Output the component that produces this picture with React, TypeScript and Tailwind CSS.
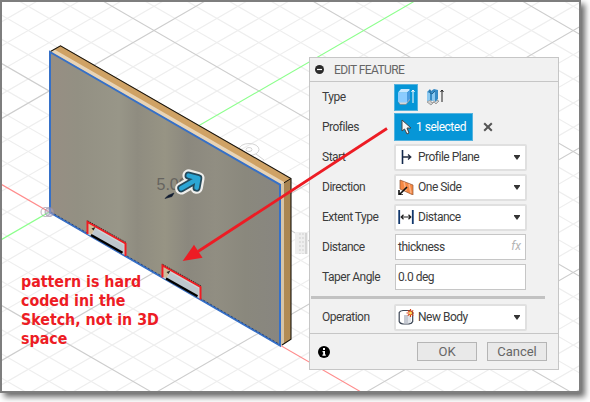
import React from "react";

const ORIGIN = { x: 49.2, y: 212 };
const SLOPE = 0.5772;

function Grid() {
  const ks = Array.from({ length: 61 }, (_, i) => i - 30);
  const line = (k: number, dir: number) => {
    const at = (x: number) => ORIGIN.y + dir * SLOPE * (x - ORIGIN.x) + k * 24.2;
    return (
      <line
        key={`${dir}:${k}`}
        x1={0}
        y1={at(0)}
        x2={580}
        y2={at(580)}
        stroke={k === 0 ? (dir < 0 ? "#8cff8c" : "#ff8c8c") : k % 5 === 0 ? "#cdcdcd" : "#eeeeee"}
        strokeWidth={k % 5 === 0 ? 1.1 : 1.2}
      />
    );
  };
  const minor = ks.filter((k) => k % 5 !== 0);
  const major = ks.filter((k) => k % 5 === 0);
  return (
    <g>
      {[...minor, ...major].map((k) => (
        <React.Fragment key={k}>
          {line(k, 1)}
          {line(k, -1)}
        </React.Fragment>
      ))}
    </g>
  );
}

function Notch({ x, y }: { x: number; y: number }) {
  return (
    <g transform={`translate(${x} ${y})`}>
      <path d="M0 0L38 21.6V34L0 12.5Z" fill="#cfd3d4" />
      <path d="M1 2L8 6L4 13L1 12Z" fill="#d0bd98" />
      <path d="M4 7L8 5.6L6 9Z" fill="#2b2925" />
      <path d="M7.5 7.5L36 23.5V32.5L4.5 14Z" fill="#bdc7cd" />
      <path d="M3.5 13.5L35 31.3" stroke="#000" strokeWidth="2.4" />
      <path d="M0 12.5V0.5L38 22V34.5" fill="none" stroke="#f01c22" strokeWidth="2" />
      <path d="M0 -0.8L38.5 20.8" stroke="#3b1818" strokeWidth="0.8" strokeDasharray="1.5 1" />
    </g>
  );
}

const HANDLE = "M181.3 188.3L197 179.3M188.6 175.6L198.3 178.2L196.6 187.6";

function Scene() {
  return (
    <svg className="absolute inset-0" width="590" height="402" viewBox="0 0 590 402">
      <defs>
        <clipPath id="canvas"><rect x="2" y="2" width="577" height="389" /></clipPath>
        <linearGradient id="steel">
          <stop offset="0" stopColor="#978e83" />
          <stop offset="0.12" stopColor="#939083" />
          <stop offset="0.3" stopColor="#989688" />
          <stop offset="0.38" stopColor="#8f8c80" />
          <stop offset="0.5" stopColor="#979484" />
          <stop offset="0.6" stopColor="#8b887e" />
          <stop offset="0.72" stopColor="#918e82" />
          <stop offset="0.85" stopColor="#8a887d" />
          <stop offset="1" stopColor="#888680" />
        </linearGradient>
        <linearGradient id="side" x1="0" y1="0" x2="0" y2="1">
          <stop offset="0" stopColor="#a78451" />
          <stop offset="1" stopColor="#b38d55" />
        </linearGradient>
      </defs>
      <g clipPath="url(#canvas)">
        <Grid />
        <g fill="none" stroke="#d5d5d5">
          <ellipse cx="249" cy="149.5" rx="10" ry="6" />
          <ellipse cx="249" cy="149.5" rx="3" ry="2" />
          <path d="M233 146L243 150M256 154L264 160" />
        </g>
        <path d="M50 51.5L60.5 45.5L291 178.5V339L280.5 345.5Z" fill="#cfa265" />
        <path d="M281 184L291 178.5V339L281 345.5Z" fill="url(#side)" />
        <path d="M50 51.5L54.5 49.5L284.5 182.3L281 185Z" fill="#e8d4b6" />
        <path d="M281 184.5L284 183V343.5L281 345.5Z" fill="#d6c5a8" />
        <path d="M50.5 51.5L60.5 45.8L291 178.5V339.3L282 345" fill="none" stroke="#17130c" strokeWidth="1.1" />
        <path d="M284 182.8L291 178.5" stroke="#17130c" />
        <path d="M50 52L280 184.7V345.5L50 212.5Z" fill="url(#steel)" stroke="#3570c8" strokeWidth="2" />
        <path d="M51 212L280 344.5" stroke="#243c69" strokeWidth="0.8" strokeDasharray="2 2" />
        <Notch x={87.5} y={221.5} />
        <Notch x={162.5} y={265} />
        <g fill="none" stroke="#90869a" strokeOpacity="0.65">
          <circle cx="45.5" cy="212" r="4.5" />
          <circle cx="49.5" cy="212" r="4.5" fill="#b0a8c8" fillOpacity="0.5" />
        </g>
        <text x="156.5" y="190" fill="#66645f" className="font-['Liberation_Sans'] text-[16px]">5.00</text>
        <path d="M165 198.5L168 195.5L174 193L172 196.5Z" fill="#101c30" stroke="#101c30" strokeWidth="0.6" />
        <g fill="none" strokeLinejoin="round" strokeLinecap="round">
          <path d={HANDLE} stroke="#efeeeb" strokeWidth="12.5" />
          <path d={HANDLE} stroke="#24495b" strokeWidth="8" />
          <path d={HANDLE} stroke="#2ba5d4" strokeWidth="4.6" />
        </g>
        <rect x="295" y="232" width="13" height="22" fill="#eee" />
        <path d="M300 233V254M303 233V254" stroke="#cfcfcf" strokeDasharray="2 2" />
        <path d="M306 233V254" stroke="#ccc" strokeWidth="1.5" />
      </g>
    </svg>
  );
}

function Row({ label, children }: { label: string; children: React.ReactNode }) {
  return (
    <div className="flex h-[30px] shrink-0 items-center pl-3">
      <span className="w-[72px] shrink-0 whitespace-nowrap">{label}</span>
      {children}
    </div>
  );
}

function Select({ value, children }: { value: string; children: React.ReactNode }) {
  return (
    <div className="flex h-[27px] w-[133px] items-center rounded-[2px] border-2 border-[#e0e0e0] bg-white pl-[2px]">
      <svg width="16" height="16" viewBox="0 0 16 16" className="shrink-0">{children}</svg>
      <span className="ml-[4px] flex-1 whitespace-nowrap">{value}</span>
      <svg width="6" height="5" className="mr-[5px]"><path d="M0 0H6V1L3 5L0 1Z" fill="#333" /></svg>
    </div>
  );
}

function Field({ value, fx }: { value: string; fx?: boolean }) {
  return (
    <div className="ml-px flex h-[26px] w-[131px] items-center justify-between border border-[#c6c6c6] bg-white pl-[2px] pr-1">
      <span>{value}</span>
      {fx && <i className="mb-[3px] text-[12px] tracking-normal text-[#b5b5b5]">fx</i>}
    </div>
  );
}

function Dialog() {
  return (
    <section className="relative ml-[307px] mt-[55px] flex h-[313px] w-[250px] flex-col border border-[#c6c6c6] bg-[#f1f1f1] font-[Roboto,sans-serif] text-[12px] tracking-[-0.5px] text-[#3c3c3c]">
      <header className="flex h-6 shrink-0 items-center border-b border-[#c6c6c6] pl-[5px] tracking-[-0.6px] text-[#666]">
        <svg width="9" height="9" className="mr-[10px]"><circle cx="4.5" cy="4.5" r="4.5" fill="#2b2b2b" /><path d="M2 4.5H7" stroke="#fff" strokeWidth="1.2" /></svg>
        EDIT FEATURE
      </header>
      <Row label="Type">
        <div className="flex h-[27px] w-6 items-center justify-center border border-[#54b3df] bg-[#0696d7]">
          <svg width="18" height="18" viewBox="0 0 18 18" className="shrink-0">
            <path d="M1 13L3 16.5H9L13 12V10Z" fill="#d6d6d6" stroke="#777" strokeWidth=".5" />
            <path d="M1 4.5H10V14.5H2L1 13.5Z" fill="#8bccff" /><path d="M1 4.5L4 1H12L13 2L10 4.5Z" fill="#c8e8ff" /><path d="M10 4.5L13 2V11L10 14.5Z" fill="#4a9ce0" />
            <path d="M16 15V2M14.5 4L16 2L17.5 4" stroke="#fff" fill="none" />
          </svg>
        </div>
        <svg width="18" height="18" viewBox="0 0 18 18" className="ml-2">
          <path d="M1 14L4 12L6 15L10 12L13 13L10 16L8 14L5 17Z" fill="#d0d0d0" stroke="#777" strokeWidth=".6" />
          <path d="M1 4L4 1L5 3L8 1L12 2V11L9 14V12L6 13L4 12L1 13Z" fill="#378bc5" />
          <path d="M1 4L4 5V12L1 13ZM6 5L9 4V12L6 13Z" fill="#8bc8f0" /><path d="M4 2V5L6 6L9 3" fill="none" stroke="#216795" />
          <path d="M16 14V2M14.5 4L16 2L17.5 4" stroke="#222" fill="none" />
        </svg>
      </Row>
      <Row label="Profiles">
        <div className="flex h-[28px] w-[79px] items-center border border-[#54b3df] bg-[#0696d7] pl-[6px] text-white">
          <svg width="11" height="16" viewBox="0 0 11 16" className="mr-1 shrink-0"><path d="M1 1V12L3.5 10L6 15L8 14L6 9H10Z" fill="#f7f7f7" stroke="#444" /></svg>
          <span className="whitespace-nowrap">1 selected</span>
        </div>
        <svg width="10" height="10" viewBox="0 0 10 10" className="ml-[10px]"><path d="M1.2 1.2L8.8 8.8M8.8 1.2L1.2 8.8" stroke="#555" strokeWidth="2" /></svg>
      </Row>
      <Row label="Start">
        <Select value="Profile Plane"><path d="M4.5 1V15" stroke="#12284c" strokeWidth="1.6" /><path d="M5 8H12M10 5.5L12.8 8L10 10.5" fill="none" stroke="#222c40" strokeWidth="1.3" /></Select>
      </Row>
      <Row label="Direction">
        <Select value="One Side"><path d="M2 1L15 6V16L2 10Z" fill="#f58742" stroke="#8f5638" strokeWidth=".7" /><path d="M6 3L8 12M11 5L13 14" stroke="#fab184" strokeWidth="1.5" /><path d="M9 8L2 15M1 11V16H5" fill="none" stroke="#111" strokeWidth="1.6" /></Select>
      </Row>
      <Row label="Extent Type">
        <Select value="Distance"><path d="M1.2 1V15M14.8 1V15" stroke="#12386d" strokeWidth="1.8" /><path d="M3 8H13M5.5 5.8L3.2 8L5.5 10.2M10.5 5.8L12.8 8L10.5 10.2" fill="none" stroke="#222" strokeWidth="1.2" /></Select>
      </Row>
      <Row label="Distance"><Field value="thickness" fx /></Row>
      <Row label="Taper Angle"><Field value="0.0 deg" /></Row>
      <div className="mb-[3px] ml-px mt-1 h-[3px] w-[234px] shrink-0 bg-[#c2c2c2]" />
      <Row label="Operation">
        <Select value="New Body">
          <path d="M1.2 3.5Q2 1.7 5 1.5H11Q14.5 2 14.7 4V12.5Q14 14.5 11 15H5Q1.8 14.5 1.2 12.5Z" fill="#fff" stroke="#3c4655" strokeWidth="1.2" />
          <path d="M6 6H10V14.5H6Z" fill="#c5c9d2" /><path d="M10 6H13V14H10Z" fill="#e0e3e8" />
          <path d="M12.5 0V8M8.5 4H16M9.8 1.3L15.2 6.7M15.2 1.3L9.8 6.7" stroke="#d94317" strokeWidth="1.2" /><circle cx="12.5" cy="4" r="1.5" fill="#ffe35c" />
        </Select>
      </Row>
      <footer className="mt-px flex flex-1 items-center border-t border-[#c6c6c6] pl-2 tracking-normal text-[#666]">
        <svg width="12" height="12" viewBox="0 0 12 12"><circle cx="6" cy="6" r="6" fill="#000" /><path d="M5 2H7V4H5ZM4.5 5H7V8.5H7.8V9.7H4.4V8.5H5.2V6.2H4.5Z" fill="#fff" /></svg>
        <button className="ml-[87px] h-[19px] w-[60px] border border-[#b5b5b5] bg-[#e9e9e9] text-[13px] leading-[17px]">OK</button>
        <button className="ml-[10px] h-[19px] w-[60px] border border-[#b5b5b5] bg-[#e9e9e9] text-[13px] leading-[17px]">Cancel</button>
      </footer>
    </section>
  );
}

export default function App() {
  return (
    <div className="relative h-[402px] w-[590px] overflow-hidden bg-white">
      <div className="h-[393px] w-[581px] border-2 border-[#7e7e7e] bg-white shadow-[4px_4px_6px_#6b6b6b]">
        <Scene />
        <Dialog />
      </div>
      <p className="absolute left-[21px] top-[272px] whitespace-pre font-['DejaVu_Sans_Condensed','DejaVu_Sans',sans-serif] text-[15.8px] font-bold leading-[19px] text-[#ed1c24]">{"pattern is hard\ncoded ini the\nSketch, not in 3D\nspace"}</p>
      <svg className="absolute inset-0" width="590" height="402">
        <path d="M387 128.5L198 251.5" stroke="#ed1c24" strokeWidth="2.8" />
        <path d="M182.7 261L194 244.7L202.5 257.8Z" fill="#ed1c24" />
      </svg>
    </div>
  );
}
